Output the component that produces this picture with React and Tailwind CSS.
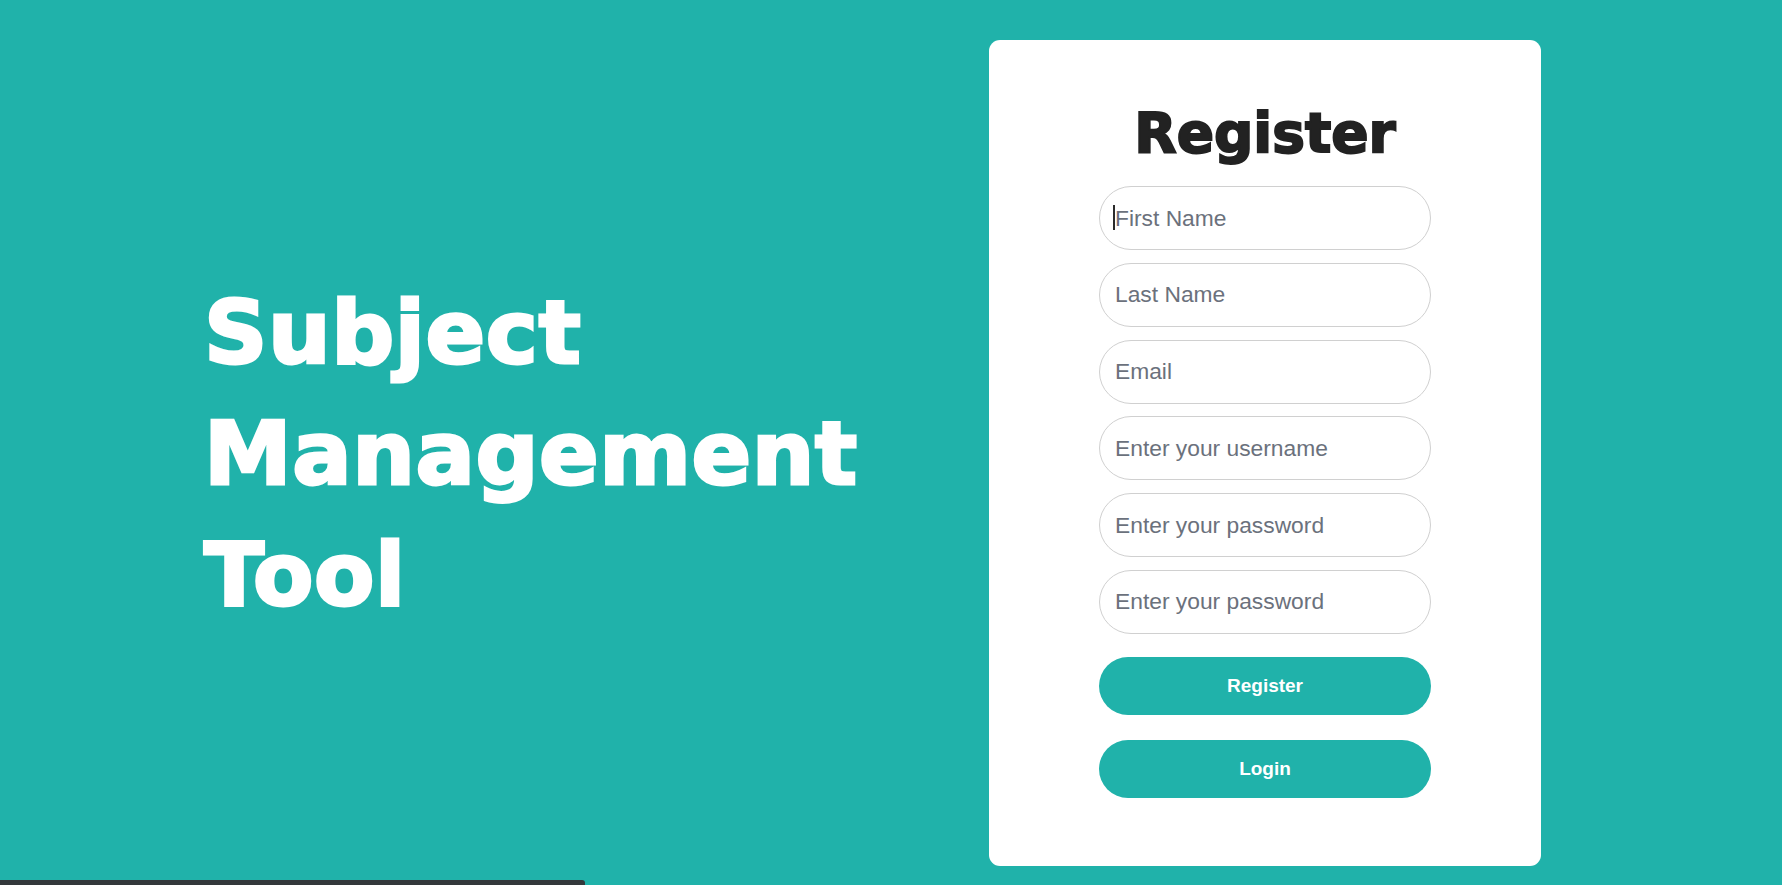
import React from 'react';

const fields = [
  { name: 'firstName', type: 'text', placeholder: 'First Name' },
  { name: 'lastName', type: 'text', placeholder: 'Last Name' },
  { name: 'email', type: 'email', placeholder: 'Email' },
  { name: 'username', type: 'text', placeholder: 'Enter your username' },
  { name: 'password', type: 'password', placeholder: 'Enter your password' },
  { name: 'confirmPassword', type: 'password', placeholder: 'Enter your password' },
];

const App = () => {
  return (
    <div className="min-h-screen bg-[#20B2AA] font-['Liberation_Sans',Arial,sans-serif]">
      <div className="flex items-center py-[40px] pl-[204px]">
        <div className="w-[785px]">
          <h1 className="font-['DejaVu_Sans',sans-serif] text-[88px] leading-[121px] font-bold tracking-[0.6px] text-white [-webkit-text-stroke:3px_white]">
            Subject
            <br />
            Management
            <br />
            Tool
          </h1>
        </div>

        <div className="w-[552px] h-[826px] bg-white rounded-[11px] flex flex-col items-center pt-[63px]">
          <h2 className="font-['DejaVu_Sans',sans-serif] text-[55px] leading-[60px] font-bold text-[#222] [-webkit-text-stroke:2px_#222]">
            Register
          </h2>

          <form className="mt-[23px] w-[332px] flex flex-col" onSubmit={(e) => e.preventDefault()}>
            <div className="flex flex-col gap-[12.8px]">
              {fields.map((field, index) => (
                <div key={field.name} className="relative">
                  <input
                    name={field.name}
                    type={field.type}
                    placeholder={field.placeholder}
                    className="h-[64px] w-full rounded-full border border-[#d0d0d0] bg-white px-[15px] text-[22.8px] text-[#333] caret-[#222] outline-none placeholder:text-[#6b717c]"
                  />
                  {index === 0 && (
                    <span className="absolute left-[14px] top-[19px] h-[25px] w-[2px] bg-[#2b2b2b]" />
                  )}
                </div>
              ))}
            </div>

            <button
              type="submit"
              className="mt-[23.5px] h-[58px] w-full rounded-full bg-[#20B2AA] text-[19px] font-bold text-white"
            >
              Register
            </button>
            <button
              type="button"
              className="mt-[25px] h-[58px] w-full rounded-full bg-[#20B2AA] text-[19px] font-bold text-white"
            >
              Login
            </button>
          </form>
        </div>
      </div>

      <div className="fixed bottom-0 left-0 h-[5px] w-[585px] rounded-tr-[3px] bg-[#33383b]" />
    </div>
  );
};

export default App;
